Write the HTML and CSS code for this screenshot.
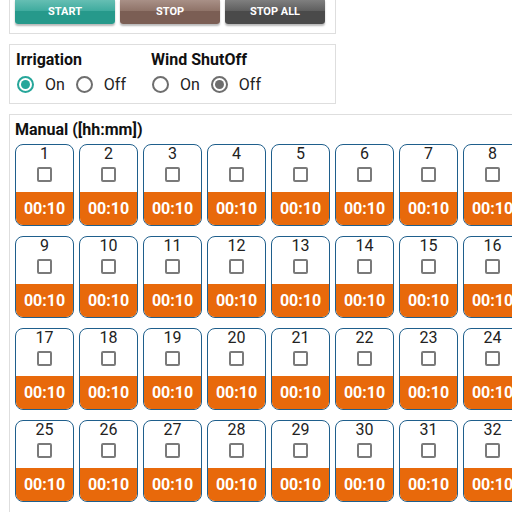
FILE: index.html
```html
<!DOCTYPE html>
<html>
<head>
<meta charset="utf-8">
<link rel="stylesheet" href="styles.css">
</head>
<body>
<div class="box box-buttons">
  <button class="btn btn-start">START</button>
  <button class="btn btn-stop">STOP</button>
  <button class="btn btn-stopall">STOP ALL</button>
</div>
<div class="box box-modes">
  <div class="group">
    <div class="title">Irrigation</div>
    <div class="radios">
      <span class="radio on teal"></span><span class="rlabel">On</span>
      <span class="radio"></span><span class="rlabel">Off</span>
    </div>
  </div>
  <div class="group">
    <div class="title">Wind ShutOff</div>
    <div class="radios">
      <span class="radio"></span><span class="rlabel">On</span>
      <span class="radio on grey"></span><span class="rlabel">Off</span>
    </div>
  </div>
</div>
<div class="box box-manual">
  <div class="title">Manual ([hh:mm])</div>
  <div class="grid" id="grid"></div>
</div>
<script src="script.js"></script>
</body>
</html>
```
FILE: script.js
```js
var g = document.getElementById('grid');
var html = '';
for (var i = 1; i <= 32; i++) {
  html += '<div class="tile"><div class="tile-top"><div class="num">' + i +
    '</div><span class="cb"></span></div><div class="tile-time">00:10</div></div>';
}
g.innerHTML = html;
```
FILE: styles.css
```css
html { overflow: hidden; }
body {
  margin: 0 0 0 9px;
  font-family: Roboto, "Noto Sans", sans-serif;
  color: #222;
  background: #fff;
}
.box {
  border: 1px solid #dedede;
  box-sizing: border-box;
}
.box-buttons {
  width: 327px;
  margin-top: -7px;
  padding: 4px 10px 9px 5px;
  display: flex;
  gap: 5px;
}
.btn {
  width: 100px;
  height: 26px;
  border: none;
  border-radius: 3px;
  color: #fff;
  font-family: Roboto, sans-serif;
  font-weight: 700;
  font-size: 11px;
  padding: 0;
  box-shadow: 0 2px 2px rgba(0,0,0,0.28);
}
.btn-start { background: linear-gradient(#6cc2b7 0%, #3fab9e 50%, #26998b 50%, #26998b 100%); }
.btn-stop { background: linear-gradient(#ad958c 0%, #8f7368 50%, #7b5e54 50%, #7b5e54 100%); }
.btn-stopall { background: linear-gradient(#858585 0%, #5e5e5e 50%, #4a4a4a 50%, #4a4a4a 100%); }

.box-modes {
  width: 327px;
  margin-top: 10px;
  padding: 5px 6px 9px 6px;
  display: flex;
}
.group { width: 135px; }
.title {
  font-size: 16px;
  font-weight: 700;
  line-height: 19px;
  color: #111;
}
.radios {
  display: flex;
  align-items: center;
  margin-top: 5px;
  height: 20px;
}
.radio {
  width: 17px;
  height: 17px;
  box-sizing: border-box;
  border: 2px solid #6e6e6e;
  border-radius: 50%;
  margin-left: 1px;
  display: flex;
  align-items: center;
  justify-content: center;
}
.radio + .rlabel { margin-left: 11px; }
.rlabel {
  font-size: 16px;
  color: #222;
  margin-right: 10px;
}
.radio.on::after {
  content: "";
  width: 9px;
  height: 9px;
  border-radius: 50%;
  background: currentColor;
}
.radio.teal { border-color: #26a69a; color: #26a69a; }
.radio.grey { border-color: #6e6e6e; color: #6e6e6e; }

.box-manual {
  width: 540px;
  margin-top: 10px;
  padding: 5px 5px 10px 5px;
}
.box-manual .title { margin-bottom: 5px; }
.grid {
  display: grid;
  grid-template-columns: repeat(8, 59px);
  column-gap: 5px;
  row-gap: 10px;
}
.tile {
  border: 1px solid #1f5f8c;
  border-radius: 8px;
  overflow: hidden;
  height: 82px;
  box-sizing: border-box;
  display: flex;
  flex-direction: column;
}
.tile-top {
  height: 47px;
  flex: none;
  display: flex;
  flex-direction: column;
  align-items: center;
}
.num {
  font-size: 16px;
  line-height: 18px;
  color: #222;
}
.cb {
  display: block;
  margin: 4px 0 0 -1px;
  width: 15px;
  height: 15px;
  box-sizing: border-box;
  border: 2px solid #7a7a7a;
  border-radius: 2px;
  background: #fff;
}
.tile-time {
  flex: 1;
  background: #e8690b;
  color: #fff;
  font-weight: 700;
  font-size: 16px;
  display: flex;
  align-items: center;
  justify-content: center;
}
```
